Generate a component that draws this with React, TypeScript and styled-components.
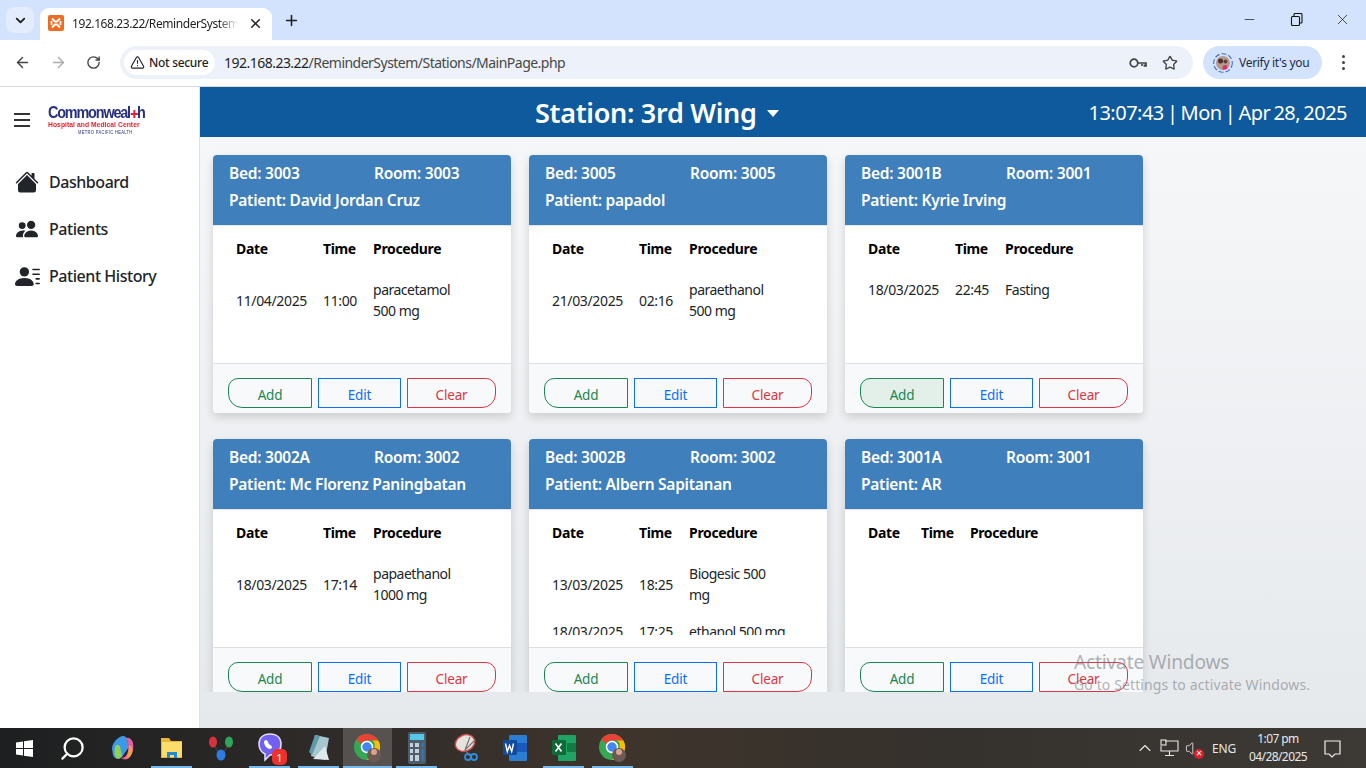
import styled, { createGlobalStyle } from 'styled-components';
import { ArrowLeft, ArrowRight, RotateCw, Star, TriangleAlert, Plus, X, ChevronDown, Minus, ChevronUp, Search, Volume } from 'lucide-react';
import { BsHouseFill, BsPeopleFill, BsPersonLinesFill } from 'react-icons/bs';

const FONT = '"Noto Sans", "Open Sans", sans-serif';

const GlobalStyle = createGlobalStyle`
  * { box-sizing: border-box; }
  html, body { margin: 0; padding: 0; height: 100%; overflow: hidden; }
  body { font-family: ${FONT}; font-size: 14px; color: #212529; }
`;

interface Entry {
  date: string;
  time: string;
  procedure: string;
}

interface Station {
  bed: string;
  room: string;
  patient: string;
  entries: Entry[];
  addHover?: boolean;
}

const STATIONS: Station[] = [
  { bed: '3003', room: '3003', patient: 'David Jordan Cruz', entries: [{ date: '11/04/2025', time: '11:00', procedure: 'paracetamol 500 mg' }] },
  { bed: '3005', room: '3005', patient: 'papadol', entries: [{ date: '21/03/2025', time: '02:16', procedure: 'paraethanol 500 mg' }] },
  { bed: '3001B', room: '3001', patient: 'Kyrie Irving', entries: [{ date: '18/03/2025', time: '22:45', procedure: 'Fasting' }], addHover: true },
  { bed: '3002A', room: '3002', patient: 'Mc Florenz Paningbatan', entries: [{ date: '18/03/2025', time: '17:14', procedure: 'papaethanol 1000 mg' }] },
  {
    bed: '3002B',
    room: '3002',
    patient: 'Albern Sapitanan',
    entries: [
      { date: '13/03/2025', time: '18:25', procedure: 'Biogesic 500 mg' },
      { date: '18/03/2025', time: '17:25', procedure: 'ethanol 500 mg' },
    ],
  },
  { bed: '3001A', room: '3001', patient: 'AR', entries: [] },
];

function ChromeIcon() {
  return (
    <svg width="28" height="30" viewBox="0 0 28 30">
      <circle cx="13" cy="14" r="13" fill="#34a853" />
      <path d="M13 1a13 13 0 0 1 11.300 6.500H13a6.500 6.500 0 0 0-5.900 3.700L2.500 6A13 13 0 0 1 13 1z" fill="#ea4335" />
      <path d="M24.300 7.500A13 13 0 0 1 13 27l5.500-9.500A6.500 6.500 0 0 0 18.500 7.500z" fill="#fbbc04" />
      <circle cx="13" cy="14" r="5.500" fill="#4285f4" stroke="#fff" strokeWidth="1.500" />
      <circle cx="20" cy="22" r="7" fill="#6d5a55" />
      <circle cx="20" cy="19" r="3" fill="#d9a58c" />
    </svg>
  );
}

function TaskbarIcons() {
  return (
    <>
      <TaskItem>
        <svg width="17" height="17" viewBox="0 0 17 17" fill="#fff">
          <path d="M0 2.400 7 1.400v6.600H0zM8 1.300 17 0v8H8zM0 9h7v6.600l-7-1zM8 9h9v8l-9-1.300z" />
        </svg>
      </TaskItem>
      <TaskItem>
        <Search size={27} color="#fff" strokeWidth={2} style={{ transform: 'scaleX(-1)', marginRight: 2 }} />
      </TaskItem>
      <TaskItem>
        <svg width="24" height="28" viewBox="0 0 24 26">
          <path d="M9 2c3-2 6-1 7 2l2 8-7 10c-3 3-8 2-9-2L1 14C1 9 5 4 9 2z" fill="#3b9ae8" />
          <path d="M4 12c1-3 4-3 5 0l2 8c0 3-4 5-6 3-2-3-2-7-1-11z" fill="#8ed05a" />
          <path d="M15 3c3-1 6 1 7 5 1 5 0 10-3 14-2 3-7 3-9 1 4 0 6-3 7-7 1-5 0-10-2-13z" fill="#e85ca3" />
          <path d="M18 10c3 1 4 4 3 8-1 3-3 5-6 6 2-4 3-9 3-14z" fill="#f4a13b" />
        </svg>
      </TaskItem>
      <TaskItem $open>
        <svg width="22" height="24" viewBox="0 0 22 22">
          <path d="M0 1h8l2 3h11v17H0z" fill="#e8b53a" />
          <path d="M1 5h20v15H1z" fill="#fbdd6b" />
          <path d="M6 21v-6h10v6h-3v-3H9v3z" fill="#1f8ad8" />
        </svg>
      </TaskItem>
      <TaskItem>
        <svg width="24" height="26" viewBox="0 0 24 26">
          <path d="M5 10l7 12M19 10l-7 12" stroke="#3a3a3a" strokeWidth="1.500" />
          <ellipse cx="4" cy="7" rx="4" ry="5.500" fill="#d7323c" />
          <ellipse cx="20" cy="7" rx="4" ry="5.500" fill="#2ea45c" />
          <ellipse cx="12" cy="20" rx="4.500" ry="5.500" fill="#2f7ce0" />
        </svg>
      </TaskItem>
      <TaskItem $open>
        <svg width="24" height="30" viewBox="0 0 24 30">
          <path d="M12 1c7 0 11 4 11 10 0 7-4 11-11 11l-5 5v-6C3 19 1 16 1 11 1 5 5 1 12 1z" fill="#7360f2" stroke="#e4e0ff" strokeWidth="1.500" />
          <path d="M8 7c2 0 2 3 3 4s3 2 3 3-1 2-2 2c-3 0-6-4-6-7 0-1 1-2 2-2z" fill="#fff" />
        </svg>
        <Badge>1</Badge>
      </TaskItem>
      <TaskItem $open>
        <svg width="24" height="30" viewBox="0 0 24 30">
          <path d="M8 2l14 3-4 22-14-4z" fill="#a8c6d0" />
          <path d="M8 2l5 1-8 19-3-3z" fill="#5f9aa8" />
          <path d="M6 26l16 1-4-14z" fill="#dfe9ec" />
        </svg>
      </TaskItem>
      <TaskItem $open $active>
        <ChromeIcon />
      </TaskItem>
      <TaskItem $open>
        <svg width="18" height="32" viewBox="0 0 18 32">
          <rect width="18" height="32" rx="2" fill="#4d5d6b" />
          <rect x="2" y="2" width="14" height="6" fill="#55c8e8" />
          <path d="M2 11h3v4H2zM7 11h4v4H7zM2 17h3v4H2zM7 17h4v4H7zM2 23h3v6H2zM7 23h4v6H7z" fill="#c6d0d8" />
          <path d="M13 11h3v4h-3zM13 17h3v12h-3z" fill="#2e74b5" />
        </svg>
      </TaskItem>
      <TaskItem>
        <svg width="24" height="30" viewBox="0 0 24 30">
          <ellipse cx="11" cy="10" rx="10" ry="8" fill="#e6e3df" stroke="#cf4a4a" strokeWidth="1.500" transform="rotate(-25 11 10)" />
          <path d="M16 4 11 17l6 7M21 7 12 16" stroke="#777" strokeWidth="1.200" fill="none" />
          <circle cx="14" cy="24" r="3" fill="none" stroke="#2f8fdc" strokeWidth="1.800" />
          <circle cx="20" cy="24" r="3" fill="none" stroke="#2f8fdc" strokeWidth="1.800" />
        </svg>
      </TaskItem>
      <TaskItem>
        <svg width="24" height="28" viewBox="0 0 24 28">
          <rect x="6" y="1" width="18" height="26" rx="1" fill="#2b7cd3" />
          <rect x="6" y="9" width="18" height="9" fill="#185abd" />
          <rect x="0" y="6" width="14" height="15" rx="1" fill="#124a9c" />
          <path d="M2.500 9.500l1.800 8 2.200-6 2.200 6 1.800-8" stroke="#fff" strokeWidth="1.400" fill="none" />
        </svg>
      </TaskItem>
      <TaskItem $open>
        <svg width="24" height="28" viewBox="0 0 24 28">
          <rect x="6" y="1" width="18" height="26" rx="1" fill="#21a366" />
          <rect x="15" y="9" width="9" height="9" fill="#107c41" />
          <rect x="0" y="6" width="14" height="15" rx="1" fill="#0e6b38" />
          <path d="M3.500 9.500l6 8M9.500 9.500l-6 8" stroke="#fff" strokeWidth="1.600" />
        </svg>
      </TaskItem>
      <TaskItem $open>
        <ChromeIcon />
      </TaskItem>
    </>
  );
}

function StationCard({ station }: { station: Station }) {
  return (
    <Card>
      <CardHeader>
        <HeaderRow>
          <BedLabel>Bed: {station.bed}</BedLabel>
          <span>Room: {station.room}</span>
        </HeaderRow>
        <HeaderRow>Patient: {station.patient}</HeaderRow>
      </CardHeader>
      <CardBody>
        <ScheduleTable>
          <thead>
            <tr>
              <DateHead>Date</DateHead>
              <th>Time</th>
              <th>Procedure</th>
            </tr>
          </thead>
          <tbody>
            {station.entries.map((entry) => (
              <tr key={entry.date + entry.time}>
                <td>{entry.date}</td>
                <td>{entry.time}</td>
                <ProcedureCell>{entry.procedure}</ProcedureCell>
              </tr>
            ))}
          </tbody>
        </ScheduleTable>
      </CardBody>
      <CardFooter>
        <ActionButton $tone="#198754" $side="left" $tint={station.addHover ? '#e3efe9' : undefined}>Add</ActionButton>
        <ActionButton $tone="#0d6efd">Edit</ActionButton>
        <ActionButton $tone="#dc3545" $side="right">Clear</ActionButton>
      </CardFooter>
    </Card>
  );
}

export default function App() {
  return (
    <>
      <GlobalStyle />
      <Screen>
        <TabStrip>
          <TabMenu><ChevronDown size={15} strokeWidth={3} /></TabMenu>
          <Tab>
            <svg width="16" height="16" viewBox="0 0 16 16">
              <rect width="16" height="16" rx="2" fill="#ea6d23" />
              <path d="M4 3.500 7 6.500h2l3-3M4 12.500 7 9.500h2l3 3M3.500 6v4M12.500 6v4" stroke="#fff" strokeWidth="1.800" fill="none" />
            </svg>
            <TabTitle>192.168.23.22/ReminderSystem/Stations</TabTitle>
            <X size={15} strokeWidth={2.4} />
          </Tab>
          <NewTab><Plus size={17} strokeWidth={2.2} /></NewTab>
          <WindowControls>
            <Minus size={15} strokeWidth={1.2} />
            <svg width="13" height="13" viewBox="0 0 13 13" fill="none" stroke="#111" strokeWidth="1.100">
              <rect x="1.500" y="3.500" width="8" height="9" rx="1" />
              <path d="M4 3V1.500a1 1 0 0 1 1-1h6a1 1 0 0 1 1 1V9a1 1 0 0 1-1 1h-1.500" />
            </svg>
            <X size={17} strokeWidth={1.1} />
          </WindowControls>
        </TabStrip>
        <Toolbar>
          <ArrowLeft size={17} color="#444" />
          <ArrowRight size={17} color="#a9abae" />
          <RotateCw size={15} color="#444" strokeWidth={2.2} />
          <AddressBar>
            <SecureChip><TriangleAlert size={15} strokeWidth={1.8} />Not secure</SecureChip>
            <Url>192.168.23.22<UrlRest>/ReminderSystem/Stations/MainPage.php</UrlRest></Url>
            <svg width="18" height="12" viewBox="0 0 18 12" fill="none" stroke="#444" strokeWidth="1.700">
              <circle cx="5" cy="6" r="3.800" />
              <path d="M9 6h8v3h-1.500V7.500M13 7v2" />
            </svg>
            <Star size={16} color="#444" strokeWidth={2} />
          </AddressBar>
          <VerifyPill>
            <svg width="20" height="20" viewBox="0 0 20 20">
              <circle cx="10" cy="10" r="9.300" fill="none" stroke="#4a6fb5" strokeWidth="1.100" strokeDasharray="5 2" />
              <circle cx="10" cy="10" r="7" fill="#b89a8d" />
              <circle cx="7.500" cy="8" r="2.500" fill="#4b3029" />
              <circle cx="12.500" cy="8.500" r="2" fill="#5f423a" />
              <path d="M10 17c-1-2 0-5 2-5s3 2 2 4z" fill="#d6336c" />
            </svg>
            Verify it's you
          </VerifyPill>
          <MenuDots><i /><i /><i /></MenuDots>
        </Toolbar>
        <Page>
          <Sidebar>
            <Brand>
              <Hamburger><i /><i /><i /></Hamburger>
              <Logo>
                <LogoName>Commonweal<LogoCross>✚</LogoCross>h</LogoName>
                <LogoSub>Hospital and Medical Center</LogoSub>
                <LogoTag>
                  <svg width="8" height="7" viewBox="0 0 8 7" fill="none" stroke="#7fa6d6" strokeWidth="0.800">
                    <path d="M4 6.500.7 3A1.800 1.800 0 0 1 4 1.500 1.800 1.800 0 0 1 7.300 3z" />
                  </svg>
                  METRO PACIFIC HEALTH
                </LogoTag>
              </Logo>
            </Brand>
            <Nav>
              <NavItem><BsHouseFill size={24} />Dashboard</NavItem>
              <NavItem><BsPeopleFill size={22} />Patients</NavItem>
              <NavItem><BsPersonLinesFill size={25} />Patient History</NavItem>
            </Nav>
          </Sidebar>
          <Content>
            <TopBar>
              <StationTitle>Station: 3rd Wing<Caret /></StationTitle>
              <Clock>13:07:43 | Mon | Apr 28, 2025</Clock>
            </TopBar>
            <CardScroller>
              <CardGrid>
                {STATIONS.map((station) => (
                  <StationCard key={station.bed} station={station} />
                ))}
              </CardGrid>
            </CardScroller>
            <Watermark>
              <strong>Activate Windows</strong>
              <span>Go to Settings to activate Windows.</span>
            </Watermark>
          </Content>
        </Page>
        <Taskbar>
          <TaskbarIcons />
          <Tray>
            <ChevronUp size={20} strokeWidth={1.3} />
            <svg width="19" height="18" viewBox="0 0 19 18" fill="none" stroke="#e8e8e8" strokeWidth="1.100">
              <path d="M5 2h13v10H1V7M9.500 12v4M5 16.500h9" />
              <rect x="1" y="1" width="5" height="5" />
            </svg>
            <MuteIcon>
              <Volume size={17} strokeWidth={1.2} />
              <MuteBadge>×</MuteBadge>
            </MuteIcon>
            <TrayText>ENG</TrayText>
            <TrayClock><span>1:07 pm</span><span>04/28/2025</span></TrayClock>
            <svg width="20" height="20" viewBox="0 0 20 20" fill="none" stroke="#eee" strokeWidth="1.200">
              <path d="M3 3h15v13h-5l-3 3-3-3H3z" />
            </svg>
          </Tray>
        </Taskbar>
      </Screen>
    </>
  );
}

const Screen = styled.div`
  width: 1366px;
  height: 768px;
  display: flex;
  flex-direction: column;
  overflow: hidden;
`;

const TabStrip = styled.div`
  height: 40px;
  flex: none;
  background: #d3e3fd;
  display: flex;
  align-items: flex-end;
  padding-left: 6px;
  color: #1f1f1f;
`;

const TabMenu = styled.div`
  width: 28px;
  height: 26px;
  margin: 0 6px 7px 0;
  border-radius: 8px;
  background: #e3ecfc;
  display: flex;
  align-items: center;
  justify-content: center;
`;

const Tab = styled.div`
  width: 232px;
  height: 32px;
  background: #fff;
  border-radius: 9px 9px 0 0;
  display: flex;
  align-items: center;
  gap: 8px;
  padding: 0 9px 2px 8px;
`;

const TabTitle = styled.span`
  flex: 1;
  overflow: hidden;
  white-space: nowrap;
  font-size: 12px;
  letter-spacing: -0.42px;
  margin-right: 2px;
  mask-image: linear-gradient(to right, #000 88%, transparent);
`;

const NewTab = styled.div`
  margin: 0 0 10px 11px;
  height: 20px;
  display: flex;
  align-items: center;
`;

const WindowControls = styled.div`
  margin: 0 15px 12px auto;
  display: flex;
  align-items: center;
  gap: 31px;

  svg:first-child {
    margin-right: 2px;
  }
`;

const Toolbar = styled.div`
  height: 47px;
  flex: none;
  background: #fff;
  border-bottom: 1px solid #d9d9d9;
  border-radius: 8px 8px 0 0;
  display: flex;
  align-items: center;
  gap: 19px;
  padding: 0 14px 1px 14px;
`;

const AddressBar = styled.div`
  width: 1073px;
  height: 33px;
  border-radius: 17px;
  background: #edf2fa;
  display: flex;
  align-items: center;
  gap: 15px;
  padding: 0 15px 0 4px;
`;

const SecureChip = styled.div`
  height: 25px;
  width: 91px;
  flex: none;
  background: #fff;
  border-radius: 13px;
  display: flex;
  align-items: center;
  gap: 4px;
  padding-left: 6px;
  font-size: 12px;
  font-weight: 500;
  letter-spacing: -0.3px;
  color: #1f1f1f;
  margin-right: -6px;
`;

const Url = styled.div`
  flex: 1;
  font-size: 14px;
  letter-spacing: -0.52px;
  color: #1f1f1f;
`;

const UrlRest = styled.span`
  color: #474747;
`;

const VerifyPill = styled.div`
  width: 119px;
  height: 33px;
  flex: none;
  margin-left: -9px;
  border-radius: 17px;
  background: #d3e3fd;
  display: flex;
  align-items: center;
  gap: 6px;
  padding-left: 10px;
  font-size: 12px;
  letter-spacing: -0.3px;
  color: #1f2a44;
`;

const MenuDots = styled.div`
  display: flex;
  flex-direction: column;
  gap: 3px;
  margin-left: 1px;

  i {
    width: 3px;
    height: 3px;
    border-radius: 50%;
    background: #444;
  }
`;

const Page = styled.div`
  flex: 1;
  min-height: 0;
  display: flex;
`;

const Sidebar = styled.aside`
  width: 200px;
  flex: none;
  background: #fff;
  border-right: 1px solid #dee2e6;
`;

const Brand = styled.div`
  height: 64px;
  display: flex;
  align-items: center;
  gap: 18px;
  padding-left: 14px;
`;

const Hamburger = styled.div`
  width: 16px;
  display: flex;
  flex-direction: column;
  gap: 4px;
  margin-top: 2px;

  i {
    height: 2px;
    background: #333;
  }
`;

const Logo = styled.div`
  width: 94px;
  display: flex;
  flex-direction: column;
  margin-top: 6px;
  font-family: "Liberation Sans", sans-serif;
  font-weight: 700;
  white-space: nowrap;
  transform: scaleX(0.9);
  transform-origin: left center;
`;

const LogoName = styled.div`
  font-size: 16px;
  line-height: 12px;
  letter-spacing: -1.3px;
  color: #27307f;
`;

const LogoCross = styled.span`
  color: #e8202e;
  font-family: "DejaVu Sans", sans-serif;
  font-size: 11px;
`;

const LogoSub = styled.div`
  font-size: 7.500px;
  line-height: 8px;
  letter-spacing: 0.05px;
  color: #e8202e;
`;

const LogoTag = styled.div`
  display: flex;
  align-items: center;
  gap: 3px;
  font-size: 4.500px;
  line-height: 8px;
  letter-spacing: 0.35px;
  margin-left: 30px;
  font-weight: 400;
  color: #27307f;
`;

const Nav = styled.nav`
  display: flex;
  flex-direction: column;
  gap: 19px;
  padding: 17px 0 0 15px;
`;

const NavItem = styled.a`
  height: 28px;
  display: grid;
  grid-template-columns: 24px auto;
  justify-content: start;
  justify-items: center;
  column-gap: 10px;
  align-items: center;
  font-size: 16px;
  font-weight: 500;
  letter-spacing: -0.45px;
  color: #212529;
`;

const Content = styled.main`
  flex: 1;
  min-width: 0;
  position: relative;
  display: flex;
  flex-direction: column;
  background: linear-gradient(to bottom, #f7f8fa, #e6e9ec);
`;

const TopBar = styled.header`
  height: 50px;
  flex: none;
  background: #0f5a9c;
  color: #fff;
  display: flex;
  align-items: center;
  justify-content: space-between;
  padding: 0 19px 0 335px;
`;

const StationTitle = styled.div`
  font-size: 27px;
  font-weight: 600;
  letter-spacing: -0.3px;
  display: flex;
  align-items: center;
  gap: 10px;
`;

const Caret = styled.span`
  width: 0;
  height: 0;
  margin-top: 2px;
  border-left: 6px solid transparent;
  border-right: 6px solid transparent;
  border-top: 7px solid #fff;
`;

const Clock = styled.div`
  font-size: 20px;
  letter-spacing: -0.52px;
  word-spacing: -1.500px;
`;

const CardScroller = styled.div`
  height: 555px;
  flex: none;
  overflow: hidden;
  padding: 18px 0 0 13px;
`;

const CardGrid = styled.div`
  display: grid;
  grid-template-columns: repeat(3, 298px);
  column-gap: 18px;
  row-gap: 26px;
`;

const Card = styled.section`
  height: 258px;
  display: flex;
  flex-direction: column;
  background: #fff;
  border-radius: 4px;
  overflow: hidden;
  box-shadow: 0 4px 10px rgba(0, 0, 0, 0.15);
`;

const CardHeader = styled.div`
  height: 71px;
  flex: none;
  background: #3f7fbb;
  color: #fff;
  padding: 5px 16px 0;
  border-bottom: 1px solid #e3e6e9;
  font-size: 15.500px;
  font-weight: 600;
  letter-spacing: -0.25px;
`;

const HeaderRow = styled.div`
  height: 27px;
  line-height: 27px;
  white-space: nowrap;
  display: flex;
`;

const BedLabel = styled.span`
  width: 145px;
`;

const CardBody = styled.div`
  height: 125px;
  margin-bottom: 12px;
  flex: none;
  overflow: hidden;
  padding: 4px 15px 0;
`;

const ScheduleTable = styled.table`
  border-collapse: collapse;
  font-size: 14px;
  letter-spacing: -0.35px;
  color: #212529;

  th, td {
    padding: 8px;
    line-height: 21px;
    text-align: left;
    vertical-align: middle;
    font-weight: 400;
  }

  th {
    padding-bottom: 12px;
    font-weight: 700;
    color: #000;
  }
`;

const DateHead = styled.th`
  width: 53px;
`;

const ProcedureCell = styled.td`
  width: 116px;
  letter-spacing: -0.5px;
`;

const CardFooter = styled.div`
  flex: 1;
  background: #f8f9fa;
  border-top: 1px solid #dcdfe2;
  display: grid;
  grid-template-columns: 84px 83px 89px;
  column-gap: 6px;
  padding: 14px 15px 0;
`;

const ActionButton = styled.div<{ $tone: string; $side?: 'left' | 'right'; $tint?: string }>`
  height: 30px;
  border: 1px solid ${({ $tone }) => $tone};
  color: ${({ $tone }) => $tone};
  background: ${({ $tint }) => $tint ?? 'transparent'};
  border-radius: ${({ $side }) =>
    $side === 'left' ? '10px 0 0 14px' : $side === 'right' ? '0 10px 14px 0' : '0'};
  font-size: 13.500px;
  letter-spacing: -0.2px;
  display: flex;
  align-items: center;
  justify-content: center;
  padding-top: 3px;
`;

const Watermark = styled.div`
  position: absolute;
  left: 874px;
  top: 561px;
  display: flex;
  flex-direction: column;
  pointer-events: none;
  color: rgba(110, 115, 120, 0.55);

  strong {
    font-size: 19.200px;
    font-weight: 400;
    letter-spacing: -0.2px;
  }

  span {
    font-size: 14px;
    letter-spacing: 0.12px;
  }
`;

const Taskbar = styled.footer`
  height: 40px;
  flex: none;
  background: linear-gradient(to right, #1d1f20, #2f2b29 25%, #3e342c 45%, #35312c 70%, #3d3a36);
  display: flex;
  align-items: stretch;
  color: #fff;
`;

const TaskItem = styled.div<{ $open?: boolean; $active?: boolean }>`
  position: relative;
  width: 49px;
  flex: none;
  display: flex;
  align-items: center;
  justify-content: center;
  background: ${({ $active }) => ($active ? 'rgba(255, 255, 255, 0.18)' : 'transparent')};

  &::after {
    content: '';
    display: ${({ $open }) => ($open ? 'block' : 'none')};
    position: absolute;
    left: ${({ $active }) => ($active ? '0' : '4px')};
    right: ${({ $active }) => ($active ? '0' : '4px')};
    bottom: 0;
    height: 2px;
    background: #76b9ed;
  }
`;

const Badge = styled.span`
  position: absolute;
  right: 7px;
  bottom: 3px;
  width: 15px;
  height: 16px;
  border-radius: 5px;
  background: #f0302c;
  color: #fff;
  font-size: 11px;
  display: flex;
  align-items: center;
  justify-content: center;
`;

const Tray = styled.div`
  margin-left: auto;
  display: flex;
  align-items: center;
  gap: 5px;
  padding-right: 24px;
  color: #e8e8e8;
`;

const MuteIcon = styled.span`
  position: relative;
  width: 17px;
  height: 17px;
  display: block;
  margin-left: 1px;
`;

const MuteBadge = styled.span`
  position: absolute;
  right: -2px;
  bottom: -2px;
  width: 10px;
  height: 10px;
  border-radius: 50%;
  background: #d8232f;
  color: #fff;
  font-size: 10px;
  line-height: 9px;
  text-align: center;
`;

const TrayText = styled.span`
  font-size: 12px;
  letter-spacing: -0.2px;
  margin-left: 5px;
`;

const TrayClock = styled.div`
  width: 58px;
  display: flex;
  flex-direction: column;
  align-items: center;
  font-size: 12px;
  line-height: 18px;
  letter-spacing: -0.6px;
  white-space: nowrap;
  margin: 0 10px 0 8px;
`;
